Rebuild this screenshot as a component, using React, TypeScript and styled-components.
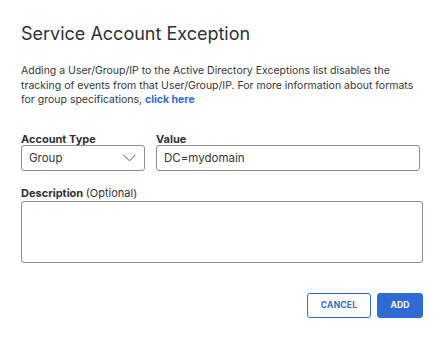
import styled, { createGlobalStyle } from "styled-components";

const GlobalStyle = createGlobalStyle`
    html, body {
        margin: 0;
        padding: 0;
        background: #ffffff;
    }
    body {
        font-family: Inter, "Liberation Sans", sans-serif;
        color: #333639;
    }
`;

const Dialog = styled.div`
    width: 440px;
    height: 338px;
    box-sizing: border-box;
    padding: 23px 17px 0 21px;
    display: flex;
    flex-direction: column;
`;

const Title = styled.h1`
    margin: 0;
    font-size: 18px;
    font-weight: 400;
    line-height: 22px;
    color: #2f3236;
`;

const Intro = styled.p`
    margin: 19px 0 0;
    font-size: 10.5px;
    line-height: 14.5px;
    color: #333639;
`;

const Link = styled.a`
    color: #2f6bd2;
    font-weight: 700;
    text-decoration: none;
`;

const FieldRow = styled.div`
    display: flex;
    gap: 11px;
    margin-top: 24px;
    padding-right: 3px;
`;

const Field = styled.div<{ $width?: number }>`
    display: flex;
    flex-direction: column;
    ${(p) => (p.$width ? `width: ${p.$width}px;` : "flex: 1;")}
`;

const Label = styled.label`
    font-size: 11px;
    font-weight: 700;
    line-height: 14px;
    color: #2f3236;
    span {
        font-weight: 400;
    }
`;

const Box = styled.div`
    height: 26px;
    box-sizing: border-box;
    margin-top: -1px;
    border: 1px solid #8c9096;
    border-radius: 3px;
    display: flex;
    align-items: center;
    justify-content: space-between;
    padding: 0 8px 0 7px;
    font-size: 11.5px;
    color: #333639;
`;

const TextArea = styled.div`
    height: 62px;
    box-sizing: border-box;
    border: 1px solid #8c9096;
    border-radius: 3px;
`;

const DescField = styled.div`
    display: flex;
    flex-direction: column;
    gap: 1px;
    margin-top: 15px;
`;

const Actions = styled.div`
    display: flex;
    justify-content: flex-end;
    gap: 6px;
    margin-top: 30px;
`;

const Button = styled.button<{ $primary?: boolean }>`
    height: 25px;
    box-sizing: border-box;
    padding: 0 12px;
    min-width: ${(p) => (p.$primary ? "46px" : "64px")};
    border: 1px solid #2f6bd2;
    border-radius: 3px;
    background: ${(p) => (p.$primary ? "#2f6bd2" : "#ffffff")};
    color: ${(p) => (p.$primary ? "#ffffff" : "#2f6bd2")};
    font-family: Inter, "Liberation Sans", sans-serif;
    font-size: 8.5px;
    font-weight: 700;
    letter-spacing: 0.2px;
`;

export default function App() {
    return (
        <>
            <GlobalStyle />
            <Dialog>
                <Title>Service Account Exception</Title>
                <Intro>
                    Adding a User/Group/IP to the Active Directory Exceptions list disables the
                    tracking of events from that User/Group/IP. For more information about formats
                    for group specifications, <Link href="#">click here</Link>
                </Intro>
                <FieldRow>
                    <Field $width={124}>
                        <Label>Account Type</Label>
                        <Box>
                            Group
                            <svg width="13" height="8" viewBox="0 0 13 8" fill="none">
                                <path d="M0.5 0.8 L6.5 6.8 L12.5 0.8" stroke="#4a4e54" strokeWidth="1" />
                            </svg>
                        </Box>
                    </Field>
                    <Field>
                        <Label>Value</Label>
                        <Box>DC=mydomain</Box>
                    </Field>
                </FieldRow>
                <DescField>
                    <Label>
                        Description <span>(Optional)</span>
                    </Label>
                    <TextArea />
                </DescField>
                <Actions>
                    <Button>CANCEL</Button>
                    <Button $primary>ADD</Button>
                </Actions>
            </Dialog>
        </>
    );
}
